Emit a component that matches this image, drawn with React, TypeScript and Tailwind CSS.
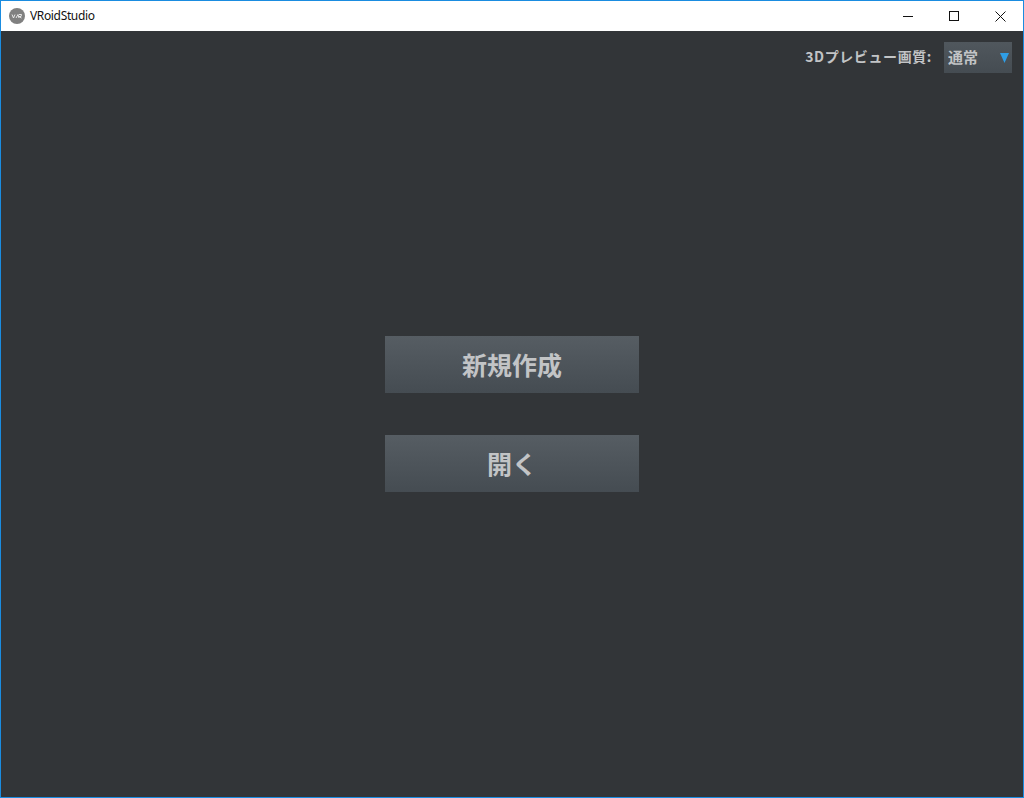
const jp = { fontFamily: '"Noto Sans CJK JP", "Noto Sans", sans-serif' };

function Big({ label }: { label: string }) {
  return (
    <button
      style={jp}
      className="flex h-[57px] w-[254px] items-center justify-center bg-gradient-to-b from-[#565d63] to-[#454c52] pt-[1px] text-[25px] font-bold text-[#c2c4c6]"
    >
      {label}
    </button>
  );
}

export default function App() {
  return (
    <div className="flex h-[798px] w-[1024px] flex-col overflow-hidden border border-t-0 border-[#1a8ce0] bg-[#323538]">
      <div className="flex h-[31px] shrink-0 items-center border-t border-[#1a8ce0] bg-white">
        <svg width="16" height="16" viewBox="0 0 16 16" className="ml-[8px]">
          <circle cx="8" cy="8" r="8" fill="#808080" />
          <path d="M3 6.5l1.5 3.5L6 6.5M7 10l2-3.5 1 3.5M10 6.5h2.5l-.5 2h-2l2.5 1.5" stroke="#e8e8e8" strokeWidth="1" fill="none" />
        </svg>
        <span className="ml-[5px] text-[12px] tracking-[-0.35px] text-[#111]" style={{ fontFamily: '"Noto Sans", sans-serif' }}>
          VRoidStudio
        </span>
        <div className="ml-auto flex h-full">
          <div className="flex w-[46px] items-center justify-center">
            <svg width="10" height="10" viewBox="0 0 10 10"><path d="M0 5.5h10" stroke="#111" /></svg>
          </div>
          <div className="flex w-[46px] items-center justify-center">
            <svg width="10" height="10" viewBox="0 0 10 10"><rect x="0.5" y="0.5" width="9" height="9" fill="none" stroke="#111" /></svg>
          </div>
          <div className="flex w-[46px] items-center justify-center">
            <svg width="11" height="11" viewBox="0 0 11 11"><path d="M0.5 0.5l10 10M10.5 0.5l-10 10" stroke="#111" /></svg>
          </div>
        </div>
      </div>
      <div className="flex items-center justify-end pt-[11px] pr-[11px]" style={jp}>
        <span className="mr-[12px] mb-[2px] text-[14px] font-bold tracking-[0.6px] text-[#c2c4c6]">3Dプレビュー画質:</span>
        <div className="flex h-[31px] w-[68px] items-center justify-between bg-gradient-to-b from-[#50575d] to-[#454c52] pr-[3px] pl-[4px] text-[15px] font-bold text-[#c2c4c6]">
          <span>通常</span>
          <svg width="9" height="10" viewBox="0 0 9 10" className="mt-[1px]"><path d="M0 0h9L4.5 10z" fill="#2f9ee6" /></svg>
        </div>
      </div>
      <div className="mt-[263px] flex flex-col items-center gap-[42px]">
        <Big label="新規作成" />
        <Big label="開く" />
      </div>
    </div>
  );
}
